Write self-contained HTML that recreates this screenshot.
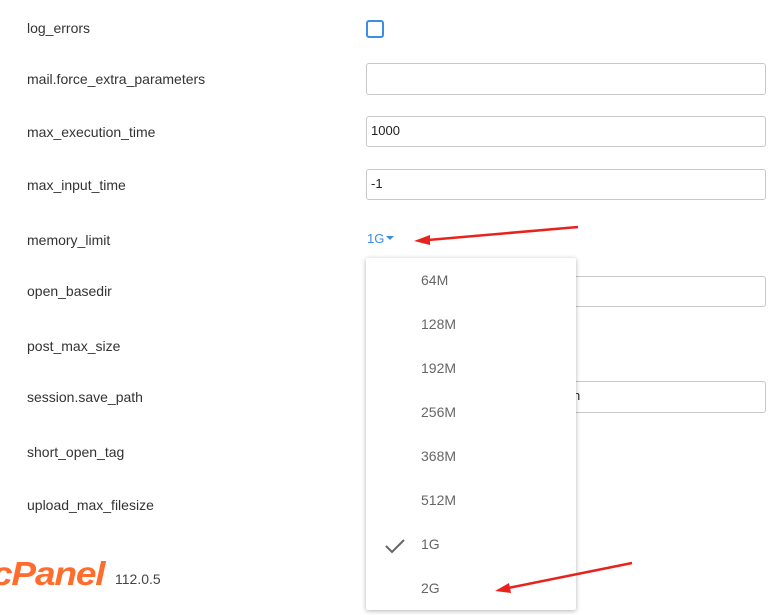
<!DOCTYPE html>
<html><head><meta charset="utf-8"><style>
body{margin:0;width:770px;height:615px;background:#fff;font-family:"Liberation Sans",sans-serif;color:#333;position:relative;overflow:hidden}
.l{position:absolute;left:27px;font-size:14px;line-height:16px}
.in{position:absolute;left:366px;width:400px;height:30px;border:1px solid #c8c8c8;border-radius:3px;box-sizing:border-box;font-size:13px;padding:0 4px;line-height:28px;color:#222;white-space:nowrap;overflow:hidden}
.menu{position:absolute;left:366px;top:258px;width:210px;height:352px;background:#fff;box-shadow:0 1px 5px rgba(0,0,0,.3);border-radius:2px}
.it{position:absolute;left:55px;font-size:14px;color:#666}
</style></head><body>
<div class="l" style="top:20px">log_errors</div>
<div style="position:absolute;left:366px;top:20px;width:14px;height:14px;border:2px solid #3a8ee6;border-radius:3px"></div>
<div class="l" style="top:71px">mail.force_extra_parameters</div>
<div class="in" style="top:63px;height:32px"></div>
<div class="l" style="top:124px">max_execution_time</div>
<div class="in" style="top:116px;height:31px">1000</div>
<div class="l" style="top:177px">max_input_time</div>
<div class="in" style="top:169px;height:31px">-1</div>
<div class="l" style="top:232px">memory_limit</div>
<div style="position:absolute;left:367px;top:231px;font-size:13px;color:#3a8ee6">1G<span style="display:inline-block;width:0;height:0;border-left:4px solid transparent;border-right:4px solid transparent;border-top:4px solid #3a8ee6;margin-left:2px;vertical-align:3px"></span></div>
<div class="l" style="top:283px">open_basedir</div>
<div class="in" style="top:276px;height:31px"></div>
<div class="l" style="top:338px">post_max_size</div>
<div class="l" style="top:389px">session.save_path</div>
<div class="in" style="top:381px;height:32px;padding-left:206px">n</div>
<div class="l" style="top:444px">short_open_tag</div>
<div class="l" style="top:497px">upload_max_filesize</div>
<div style="position:absolute;left:-8px;top:555px;font-size:33px;font-weight:bold;font-style:italic;color:#ff6c2c;letter-spacing:-1px;transform:scaleX(1.12);transform-origin:left">cPanel</div>
<div style="position:absolute;left:115px;top:571px;font-size:14px;color:#444">112.0.5</div>
<div class="menu">
<div class="it" style="top:14px">64M</div>
<div class="it" style="top:58px">128M</div>
<div class="it" style="top:102px">192M</div>
<div class="it" style="top:146px">256M</div>
<div class="it" style="top:190px">368M</div>
<div class="it" style="top:234px">512M</div>
<div class="it" style="top:278px">1G</div>
<div class="it" style="top:322px">2G</div>
<svg style="position:absolute;left:18px;top:278px" width="24" height="20"><path d="M2 10 L8 16 L20 4" fill="none" stroke="#666" stroke-width="2"/></svg>
</div>
<svg style="position:absolute;left:0;top:0" width="770" height="615">
<line x1="578" y1="227" x2="428" y2="240" stroke="#e8231d" stroke-width="2.5"/>
<path d="M414 241 L430 235 L430 245 Z" fill="#e8231d"/>
<line x1="632" y1="563" x2="508" y2="588" stroke="#e8231d" stroke-width="2.5"/>
<path d="M495 591 L509 583 L511 593 Z" fill="#e8231d"/>
</svg>
</body></html>
